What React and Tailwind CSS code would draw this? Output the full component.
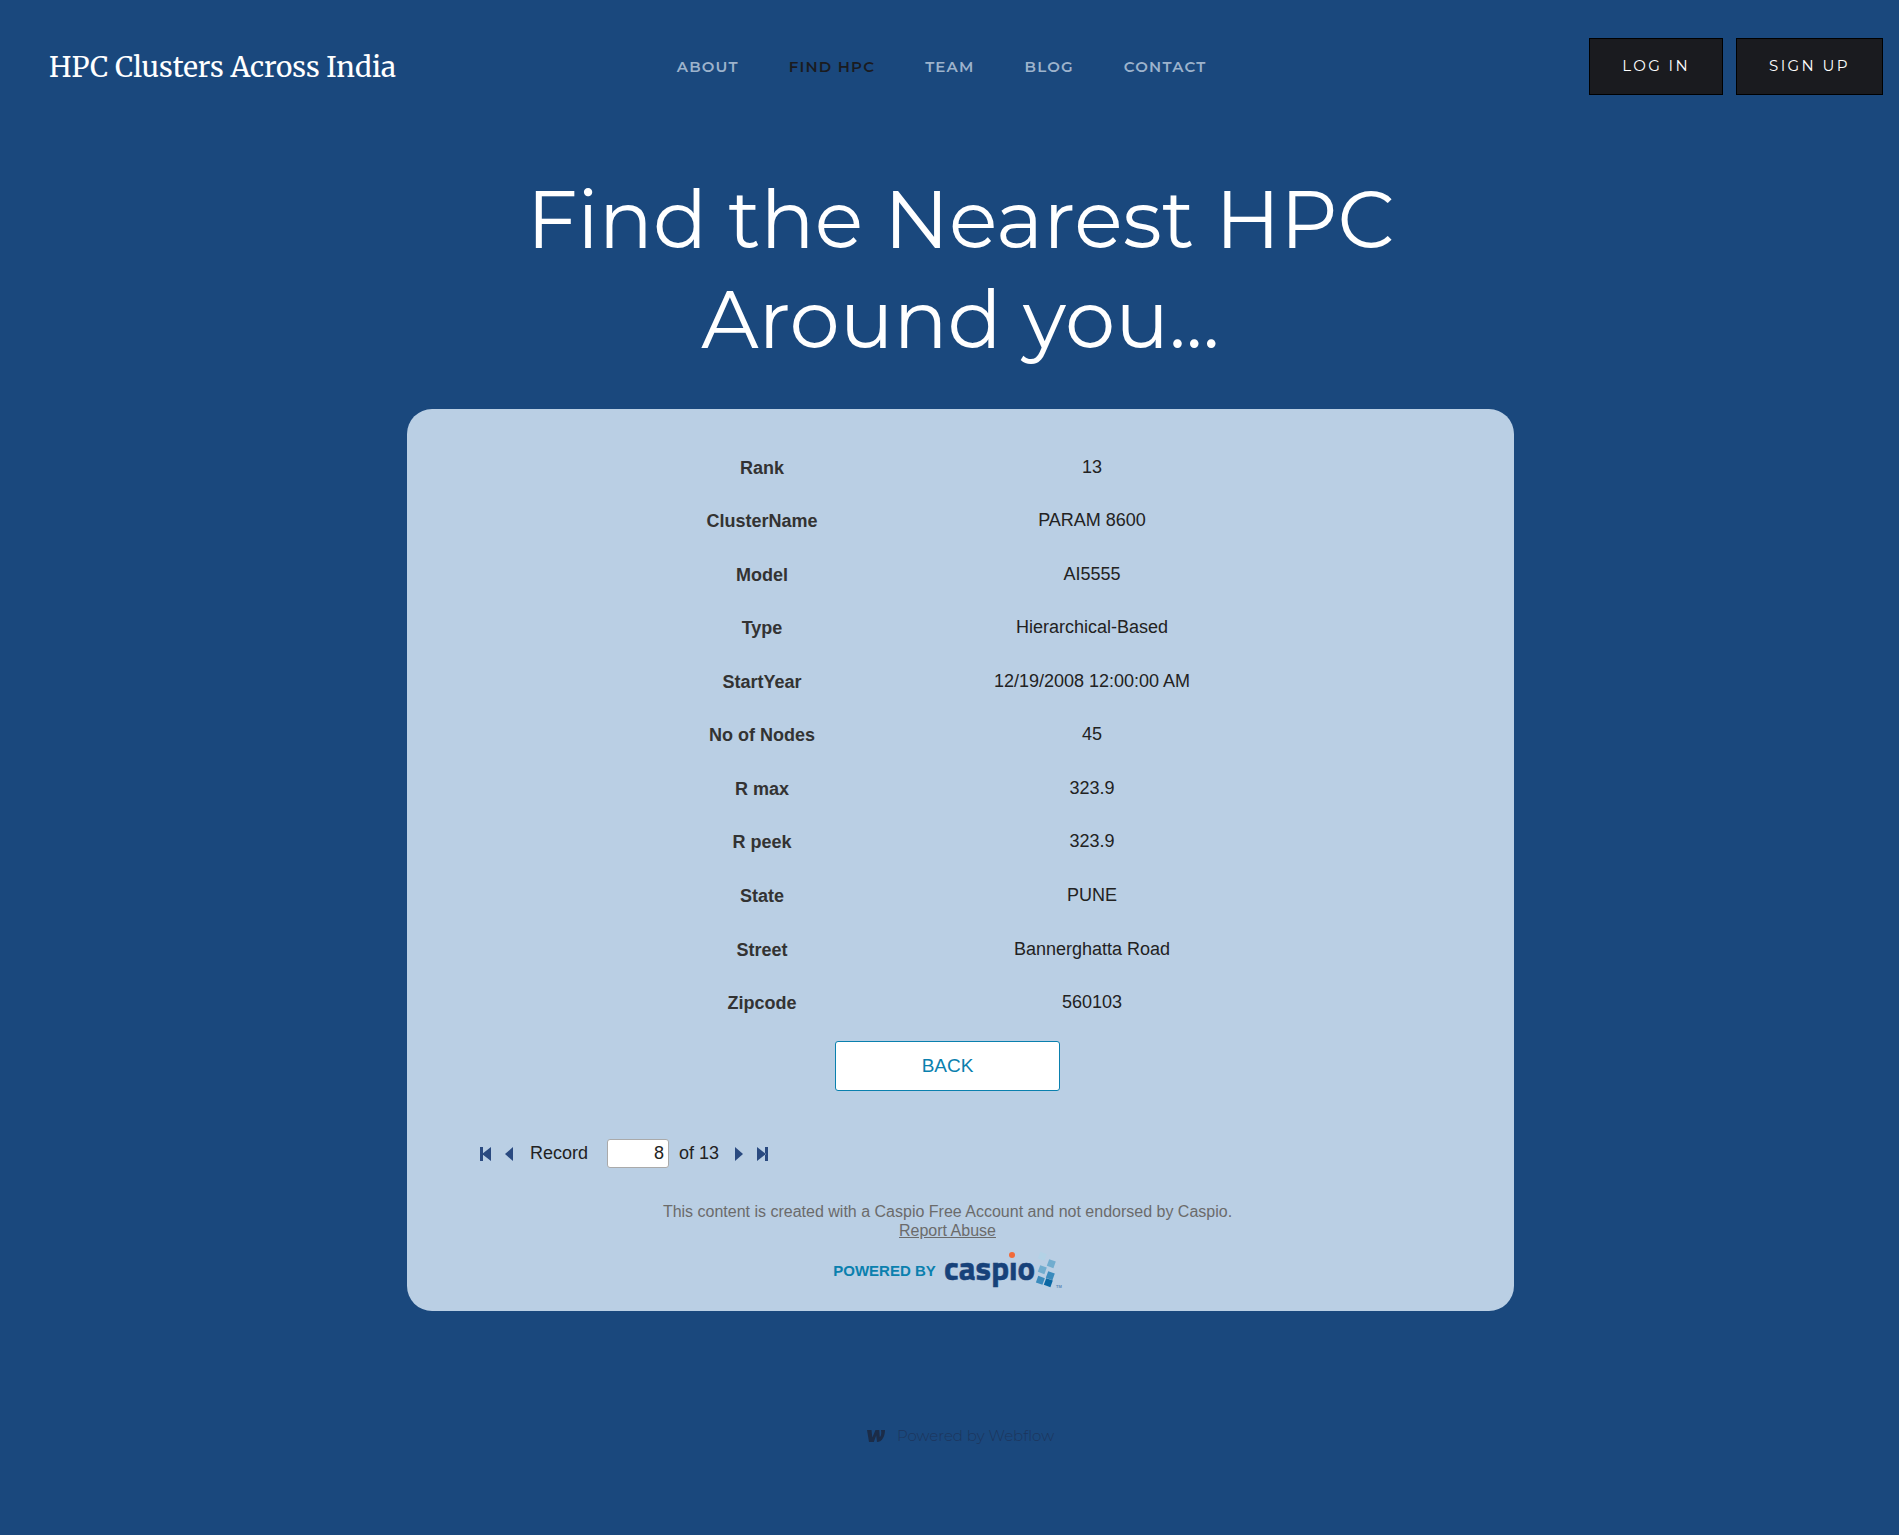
const display = "font-['Montserrat','Inter',sans-serif]";

const navItems = [
  { label: "About" },
  { label: "Find HPC", active: true },
  { label: "Team" },
  { label: "Blog" },
  { label: "Contact" },
];

const fields = [
  ["Rank", "13"],
  ["ClusterName", "PARAM 8600"],
  ["Model", "AI5555"],
  ["Type", "Hierarchical-Based"],
  ["StartYear", "12/19/2008 12:00:00 AM"],
  ["No of Nodes", "45"],
  ["R max", "323.9"],
  ["R peek", "323.9"],
  ["State", "PUNE"],
  ["Street", "Bannerghatta Road"],
  ["Zipcode", "560103"],
];

function PagerButton({ label, children, width }) {
  return (
    <button type="button" aria-label={label} className="flex h-6 items-center text-[#2a4a80]">
      <svg width={width} height="14" viewBox={`0 0 ${width} 14`} fill="currentColor" aria-hidden="true">
        {children}
      </svg>
    </button>
  );
}

function CaspioLogo() {
  return (
    <svg width="118" height="40" viewBox="0 0 118 40" role="img" aria-label="Caspio" className="overflow-visible">
      <text
        x="0"
        y="29"
        fill="#17427a"
        stroke="#17427a"
        strokeWidth="0.500"
        fontSize="33"
        fontWeight="700"
        fontFamily="'Titillium Web', Lato, 'Open Sans', sans-serif"
      >
        caspıo
      </text>
      <circle cx="68" cy="4" r="3" fill="#f26b3a" />
      <g>
        <rect x="95" y="2" width="7" height="7" fill="#b3d2e6" transform="rotate(20 99 5)" />
        <rect x="104" y="9" width="7" height="7" fill="#71adcf" transform="rotate(20 107 12)" />
        <rect x="95" y="15" width="7" height="7" fill="#71adcf" transform="rotate(20 98 18)" />
        <rect x="103" y="21" width="7" height="7" fill="#3a8bbd" transform="rotate(20 106 24)" />
        <rect x="93" y="26" width="7" height="7" fill="#3a8bbd" transform="rotate(20 97 29)" />
        <rect x="101" y="28" width="7" height="7" fill="#0a68a4" transform="rotate(20 104 31)" />
      </g>
      <text x="112" y="37" fill="#5b87b5" fontSize="4" fontFamily="Liberation Sans, sans-serif">
        TM
      </text>
    </svg>
  );
}

function Header() {
  return (
    <header className="flex items-center pt-[38px] pr-4 pl-[49px]">
      <a href="#home" className="font-['Merriweather','Noto_Serif','Liberation_Serif',serif] text-[28px] leading-10 whitespace-nowrap text-white">
        HPC Clusters Across India
      </a>
      <nav className={`flex flex-1 justify-center gap-[50px] pr-[102px] text-[15px] leading-5 font-semibold tracking-[0.08em] whitespace-nowrap uppercase ${display}`}>
        {navItems.map((item) => (
          <a
            key={item.label}
            href={`#${item.label.toLowerCase().replace(" ", "-")}`}
            className={item.active ? "text-[#1a1b1f]" : "text-[#9db3cc]"}
          >
            {item.label}
          </a>
        ))}
      </nav>
      <div className={`flex justify-end gap-[13px] text-[15px] tracking-[0.16em] whitespace-nowrap text-white ${display}`}>
        <button type="button" className="h-[57px] border border-black bg-[#1a1b1f] px-8 uppercase">
          Log in
        </button>
        <button type="button" className="h-[57px] border border-black bg-[#1a1b1f] px-8 uppercase">
          Sign up
        </button>
      </div>
    </header>
  );
}

export default function App() {
  return (
    <div className="min-h-screen bg-[#1a487d] pb-[83px] font-['Liberation_Sans',Arial,sans-serif]">
      <Header />
      <div className="pl-[22px]">
        <main className="mx-auto w-full max-w-[1107px]">
          <h1 className={`mx-auto mt-[75px] max-w-[940px] text-center text-[80px] leading-[100px] text-white ${display}`}>
            Find the Nearest HPC Around you...
          </h1>
          <section className="mt-[39px] rounded-[25px] bg-[#bacfe4] pt-[31px] pr-[26px] pb-5 text-lg text-[#222]">
            <table className="mx-auto h-[589px] w-[660px] table-fixed text-center">
              <colgroup>
                <col className="w-[289px]" />
                <col />
              </colgroup>
              <tbody>
                {fields.map(([label, value]) => (
                  <tr key={label}>
                    <th scope="row" className="pt-[2px] font-bold text-[#333]">{label}</th>
                    <td>{value}</td>
                  </tr>
                ))}
              </tbody>
            </table>
            <button
              type="button"
              className="mx-auto mt-3 block h-[50px] w-[225px] rounded-[3px] border border-[#0a80ae] bg-white text-[19px] text-[#0a80ae]"
            >
              BACK
            </button>
            <form className="mt-12 flex items-center pl-[73px] leading-[29px]">
              <PagerButton label="First record" width={11}>
                <path d="M0 0h3v14H0zM11 0v14L2 7z" />
              </PagerButton>
              <span className="ml-[14px] flex">
                <PagerButton label="Previous record" width={8}>
                  <path d="M8 0v14L0 7z" />
                </PagerButton>
              </span>
              <label htmlFor="record" className="ml-[17px]">Record</label>
              <input
                id="record"
                type="text"
                defaultValue="8"
                className="ml-[19px] h-[29px] w-[62px] rounded-[3px] border border-[#aaa] bg-white px-1 text-right"
              />
              <span className="mr-4 ml-[10px]">of 13</span>
              <PagerButton label="Next record" width={8}>
                <path d="M0 0v14l8-7z" />
              </PagerButton>
              <span className="ml-[14px] flex">
                <PagerButton label="Last record" width={11}>
                  <path d="M8 0h3v14H8zM0 0v14l9-7z" />
                </PagerButton>
              </span>
            </form>
            <p className="mt-[34px] text-center text-base leading-[19px] text-[#6b6b6b]">
              This content is created with a Caspio Free Account and not endorsed by Caspio.
              <br />
              <a href="#report" className="underline">Report Abuse</a>
            </p>
            <a href="#caspio" className="mt-[11px] flex items-center justify-center gap-2 text-[15px] font-bold text-[#0a80ae]">
              POWERED BY
              <CaspioLogo />
            </a>
          </section>
        </main>
        <footer className={`mt-[113px] flex items-center justify-center gap-3 text-[15px] leading-6 font-light text-[#1c355c] ${display}`}>
          <svg width="18" height="12" viewBox="0 0 18 12" fill="#1b2c48" aria-hidden="true">
            <path d="M0 0h4.500l.8 7.500L8.500 0h3.800l.5 7.200C14.500 5.500 14.500 2.500 14 0h4c0 5.500-2.500 12-8 12l-.8-6.500L6.800 12H2z" />
          </svg>
          <a href="#webflow">Powered by Webflow</a>
        </footer>
      </div>
    </div>
  );
}
